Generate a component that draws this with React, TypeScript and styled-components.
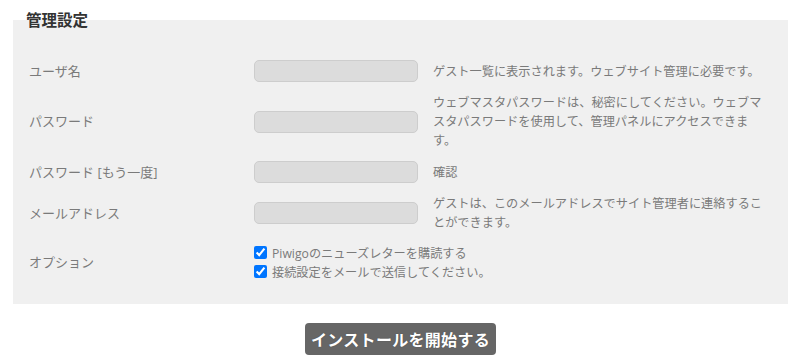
import React from 'react'
import styled, { createGlobalStyle } from 'styled-components'

const GlobalStyle = createGlobalStyle`
  html, body {
    margin: 0;
    padding: 0;
    background: #ffffff;
  }
  body {
    font-family: "Open Sans", "Noto Sans CJK JP", sans-serif;
    font-size: 12px;
    color: #777;
  }
`

const Page = styled.div`
  padding: 0 12px 0 13px;
  display: flex;
  flex-direction: column;
  align-items: center;
`

const Fieldset = styled.fieldset`
  box-sizing: border-box;
  width: 100%;
  margin: 9px 0 0;
  padding: 29px 0 23px 16px;
  border: 0;
  background: #f0f0f0;
  min-inline-size: 0;
`

const Legend = styled.legend`
  margin-left: -3px;
  padding: 0;
  font-size: 15.5px;
  line-height: 22px;
  font-weight: 700;
  color: #333;
`

const Grid = styled.div`
  display: grid;
  grid-template-columns: 225px 164px 1fr;
  row-gap: 11px;
  align-items: center;
  padding-right: 20px;
`

const Label = styled.div`
  font-size: 13px;
  line-height: 19px;
  color: #7a7a7a;
`

const Input = styled.input`
  box-sizing: border-box;
  width: 164px;
  height: 22px;
  margin: 0;
  border: 1px solid #cdcdcd;
  border-radius: 5px;
  background: #dcdcdc;
  outline: none;
`

const Hint = styled.div`
  padding-left: 15px;
  font-size: 12.2px;
  line-height: 19px;
  color: #7a7a7a;
`

const Options = styled.div`
  grid-column: 2 / span 2;
  display: flex;
  flex-direction: column;
`

const Check = styled.label`
  display: flex;
  align-items: center;
  height: 19px;
  font-size: 12.2px;
  color: #7a7a7a;

  input {
    width: 13px;
    height: 13px;
    margin: 0 5px 0 0;
    accent-color: #0075ff;
  }
`

const Submit = styled.button`
  margin-top: 19px;
  height: 32px;
  padding: 0 6px;
  border: 0;
  border-radius: 4px;
  background: #666;
  color: #fff;
  font-family: "Open Sans", "Noto Sans CJK JP", sans-serif;
  font-size: 16px;
  font-weight: 700;
  letter-spacing: 0.3px;
  text-shadow: 0 0 1px rgba(0, 0, 0, 0.4);
  cursor: pointer;
`

const rows = [
  { label: 'ユーザ名', type: 'text', hint: 'ゲスト一覧に表示されます。ウェブサイト管理に必要です。' },
  {
    label: 'パスワード',
    type: 'password',
    hint: 'ウェブマスタパスワードは、秘密にしてください。ウェブマスタパスワードを使用して、管理パネルにアクセスできます。',
  },
  { label: 'パスワード [もう一度]', type: 'password', hint: '確認' },
  { label: 'メールアドレス', type: 'email', hint: 'ゲストは、このメールアドレスでサイト管理者に連絡することができます。' },
]

export default function App() {
  return (
    <>
      <GlobalStyle />
      <Page>
        <Fieldset>
          <Legend>管理設定</Legend>
          <Grid>
            {rows.map((row) => (
              <React.Fragment key={row.label}>
                <Label>{row.label}</Label>
                <Input type={row.type} />
                <Hint>{row.hint}</Hint>
              </React.Fragment>
            ))}
            <Label>オプション</Label>
            <Options>
              <Check>
                <input type="checkbox" defaultChecked />
                Piwigoのニューズレターを購読する
              </Check>
              <Check>
                <input type="checkbox" defaultChecked />
                接続設定をメールで送信してください。
              </Check>
            </Options>
          </Grid>
        </Fieldset>
        <Submit type="button">インストールを開始する</Submit>
      </Page>
    </>
  )
}
